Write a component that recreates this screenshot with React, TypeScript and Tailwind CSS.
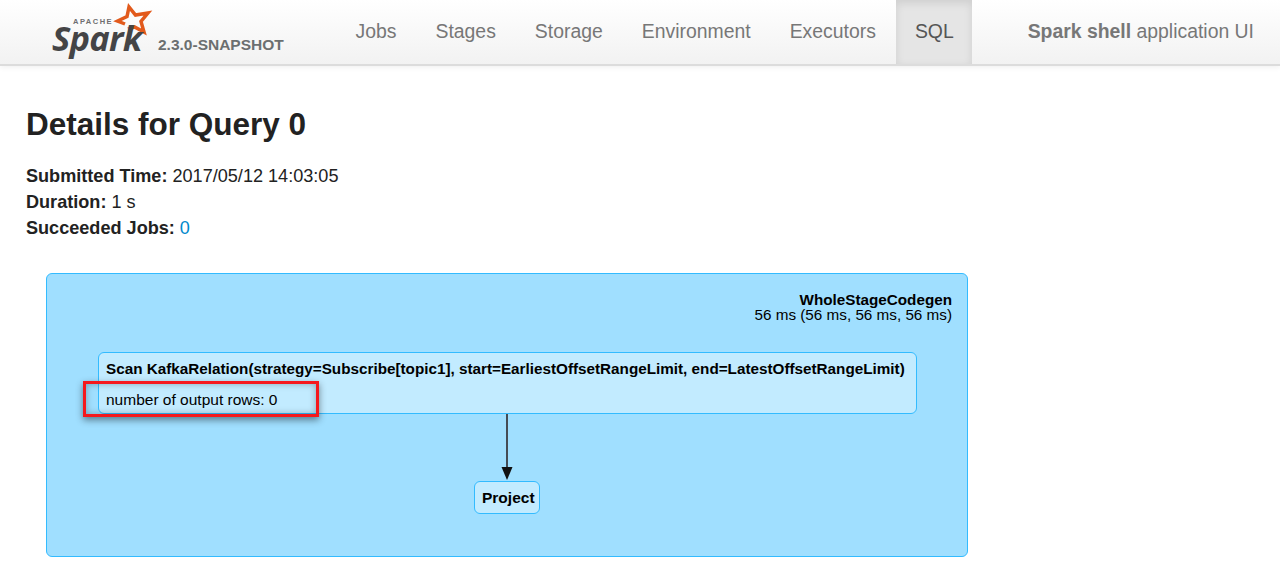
const navItems = ['Jobs', 'Stages', 'Storage', 'Environment', 'Executors'];

const SparkLogo = () => (
  <div className="relative h-[60px] w-[104px] shrink-0">
    <svg className="absolute left-[60px] top-0" width="44" height="40" viewBox="0 0 44 40">
      <path
        d="M16 27 L22.5 25 L32 30 L29 19.5 L36 11 L23.5 13 L17 5 L15 14.5 L5.5 19 L13 22"
        fill="none"
        stroke="#e25a1c"
        strokeWidth="3.5"
        strokeMiterlimit="6"
      />
    </svg>
    <span className="absolute left-[21px] top-[16px] text-[7.5px] leading-none font-bold tracking-[1.5px] text-[#6e6e70]">APACHE</span>
    <span className="absolute left-0 top-[24px] text-[34.5px] leading-[24px] font-bold tracking-[-0.8px] text-[#444446] italic [font-family:'Open_Sans','Liberation_Sans',sans-serif]">Spark</span>
  </div>
);

export default function App() {
  return (
    <div className="min-h-[581px] bg-white text-[#222] [font-family:'Liberation_Sans',Arial,sans-serif]">
      <header className="flex h-[66px] items-stretch border-b-2 border-[#dcdcdc] bg-gradient-to-b from-white to-[#f2f2f2] shadow-[0_1px_6px_rgba(0,0,0,0.07)]">
        <div className="flex w-[336px] shrink-0 items-start pl-[52px] pt-[2px]">
          <SparkLogo />
          <span className="ml-[2px] mt-[35px] text-[15.5px] leading-[16px] font-bold whitespace-nowrap text-[#6b6f70]">2.3.0-SNAPSHOT</span>
        </div>
        <nav className="flex items-stretch">
          {navItems.map((item) => (
            <a key={item} className="flex items-center px-[19.5px] text-[19.4px] text-[#777]">{item}</a>
          ))}
          <a className="ml-px flex w-[76px] items-center justify-center bg-[#e5e5e5] text-[19.4px] text-[#555] shadow-[inset_0_3px_8px_rgba(0,0,0,0.1)]">SQL</a>
        </nav>
        <p className="ml-auto flex items-center pr-[26px] text-[19.4px] text-[#777]">
          <strong className="font-bold">Spark shell</strong>&nbsp;application UI
        </p>
      </header>

      <main className="px-[26px]">
        <h3 className="mt-[38px] text-[31.5px] leading-[40px] font-bold text-[#222]">Details for Query 0</h3>
        <ul className="mt-[19px] text-[18.1px] leading-[26px]">
          <li><strong>Submitted Time:</strong> 2017/05/12 14:03:05</li>
          <li><strong>Duration:</strong> 1 s</li>
          <li><strong>Succeeded Jobs:</strong> <a className="text-[#0088cc]">0</a></li>
        </ul>

        <div className="relative mt-[32px] ml-[20px] h-[284px] w-[922px] rounded-[6px] border border-[#33bbff] bg-[#a0dfff] text-black">
          <div className="absolute right-[15px] top-[18px] text-right text-[15.25px] leading-[15px]">
            <div className="font-bold">WholeStageCodegen</div>
            <div>56 ms (56 ms, 56 ms, 56 ms)</div>
          </div>

          <div className="absolute left-[51px] top-[78px] h-[62px] w-[819px] rounded-[6px] border border-[#33bbff] bg-[#c2ebff] px-[7px] text-[15.25px]">
            <div className="mt-[7px] leading-[18px] font-bold whitespace-nowrap">
              Scan KafkaRelation(strategy=Subscribe[topic1], start=EarliestOffsetRangeLimit, end=LatestOffsetRangeLimit)
            </div>
            <div className="mt-[13px] text-[15.5px] leading-[18px]">number of output rows: 0</div>
          </div>

          <svg className="absolute left-[453px] top-[140px]" width="14" height="68" viewBox="0 0 14 68">
            <path d="M7 0 V56" stroke="#444c55" strokeWidth="2" fill="none" />
            <path d="M1.5 53 H12.5 L7 66 Z" fill="#111" />
          </svg>

          <div className="absolute left-[427px] top-[207px] flex h-[33px] w-[66px] items-center rounded-[6px] border border-[#33bbff] bg-[#c2ebff] pl-[7px] pt-px text-[15.5px] font-bold">
            Project
          </div>

          <div className="absolute left-[36px] top-[107px] h-[36px] w-[236px] border-[3px] border-[#f5181d] shadow-[0_3px_7px_rgba(0,0,0,0.45),inset_0_0_7px_rgba(0,0,0,0.3)]" />
        </div>
      </main>
    </div>
  );
}
